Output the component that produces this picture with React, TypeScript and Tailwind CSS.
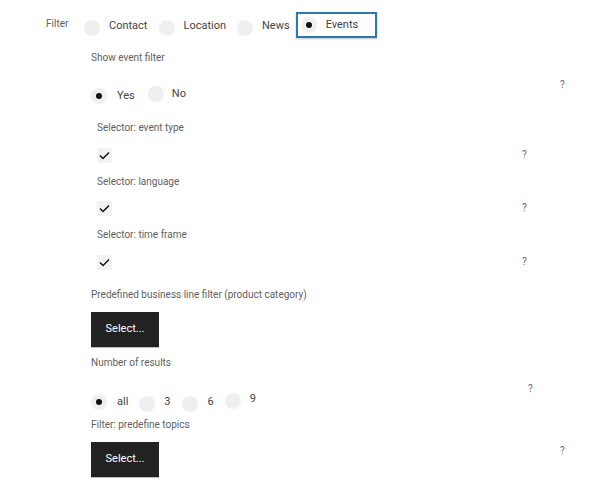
import React from "react";

function Radio({ checked }: { checked?: boolean }) {
  return (
    <span className="flex h-[16px] w-[16px] shrink-0 items-center justify-center rounded-full bg-[#efefef]">
      {checked ? <span className="h-[6px] w-[6px] rounded-full bg-[#111]" /> : null}
    </span>
  );
}

function Check() {
  return (
    <span className="flex h-[15px] w-[15px] items-center justify-center bg-[#f3f3f3]">
      <svg width="15" height="15" viewBox="0 0 15 15">
        <polyline points="3,7.5 6,10.5 12,4.5" fill="none" stroke="#111" strokeWidth="1.5" />
      </svg>
    </span>
  );
}

function Label({ children, className = "" }: { children: React.ReactNode; className?: string }) {
  return <div className={"text-[10px] leading-[14px] text-[#5f5f5f] " + className}>{children}</div>;
}

function Help({ className = "" }: { className?: string }) {
  return <span className={"text-[10px] leading-[14px] text-[#666] " + className}>?</span>;
}

function SelectBtn() {
  return (
    <div className="flex h-[35px] w-[68px] items-center justify-center bg-[#222] text-[11px] text-white shadow-[0_1px_0_#bbb]">
      Select...
    </div>
  );
}

export default function App() {
  return (
    <div className="h-[500px] w-[600px] overflow-hidden bg-white font-['Roboto',sans-serif] text-[#444]">
      <div className="flex items-start pl-[46px] pt-[12px]">
        <span className="mt-[5px] w-[38px] text-[10px] leading-[14px] text-[#5f5f5f]">Filter</span>
        <div className="flex h-[26px] items-center text-[11px]">
          <span className="mt-[5px]"><Radio /></span>
          <span className="ml-[9px] mr-[12px] mt-[2px]">Contact</span>
          <span className="mt-[5px]"><Radio /></span>
          <span className="ml-[8px] mr-[11px] mt-[2px]">Location</span>
          <span className="mt-[5px]"><Radio /></span>
          <span className="ml-[9px] mr-[6px] mt-[2px]">News</span>
          <div className="flex h-[26px] items-center border-2 border-[#2a78b4] pl-[3px] pr-[17px] shadow-[0_1px_2px_rgba(0,0,0,0.25)]">
            <Radio checked />
            <span className="ml-[9px] mt-[1px]">Events</span>
          </div>
        </div>
      </div>

      <div className="pl-[91px]">
        <Label className="mt-[13px]">Show event filter</Label>

        <div className="mt-[13px] flex items-start">
          <div className="mt-[10px] flex w-[469px] items-center text-[11px]">
            <Radio checked />
            <span className="ml-[10px] mr-[13px]">Yes</span>
            <span className="-mt-[4px]"><Radio /></span>
            <span className="-mt-[4px] ml-[8px]">No</span>
          </div>
          <Help />
        </div>

        <div className="pl-[6px]">
          <Label className="mt-[16px]">Selector: event type</Label>
          <div className="mt-[13px] flex items-center">
            <div className="w-[425px]"><Check /></div>
            <Help />
          </div>
          <Label className="mt-[12px]">Selector: language</Label>
          <div className="mt-[12px] flex items-center">
            <div className="w-[425px]"><Check /></div>
            <Help />
          </div>
          <Label className="mt-[12px]">Selector: time frame</Label>
          <div className="mt-[13px] flex items-center">
            <div className="w-[425px]"><Check /></div>
            <Help />
          </div>
        </div>

        <Label className="mt-[18px]">Predefined business line filter (product category)</Label>
        <div className="mt-[10px]"><SelectBtn /></div>

        <Label className="mt-[9px]">Number of results</Label>
        <div className="mt-[12px] flex items-start">
          <div className="mt-[11px] flex w-[437px] items-center text-[11px]">
            <Radio checked />
            <span className="ml-[10px] mr-[11px]">all</span>
            <span className="mt-[3px]"><Radio /></span>
            <span className="ml-[9px] mr-[11px]">3</span>
            <span className="mt-[3px]"><Radio /></span>
            <span className="ml-[10px] mr-[11px]">6</span>
            <span className="-mt-[2px]"><Radio /></span>
            <span className="-mt-[5px] ml-[9px]">9</span>
          </div>
          <Help />
        </div>

        <Label className="mt-[6px]">Filter: predefine topics</Label>
        <div className="mt-[10px] flex items-start">
          <div className="w-[469px]"><SelectBtn /></div>
          <Help className="mt-[2px]" />
        </div>
      </div>
    </div>
  );
}
